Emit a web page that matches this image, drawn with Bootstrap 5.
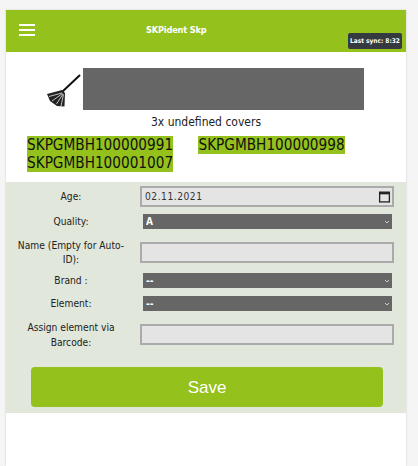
<!DOCTYPE html>
<html lang="en">
<head>
    <meta charset="UTF-8">
    <meta name="viewport" content="width=device-width, initial-scale=1.0">
    <title>SKPident Skp</title>
    <link href="https://cdn.jsdelivr.net/npm/bootstrap@5.3.0/dist/css/bootstrap.min.css" rel="stylesheet">
    <style>
        html, body { height: 100%; overflow: hidden; }
        body { background: #f5f5f5; font-family: "DejaVu Sans Condensed", "DejaVu Sans", sans-serif; font-stretch: condensed; color: #222; font-size: 10.2px; }
        .app-shell { margin: 10px 12px 0 6px; width: 400px; height: 456px; background: #fff; box-shadow: 0 0 2px #ccc; }
        .app-bar { height: 42px; background: #94c11c; position: relative; padding: 0; }
        .burger { width: 16px; margin-left: 13px; margin-top: -2px; }
        .burger span { display: block; height: 2px; background: #fff; margin-bottom: 3px; }
        .app-title { position: absolute; left: 140px; top: 13px; color: #fff; font-size: 9.2px; font-weight: 700; letter-spacing: -.2px; }
        .sync-tag { position: absolute; left: 342px; top: 23px; width: 54px; height: 16px; background: #343a40; color: #fff; font-size: 6.5px; line-height: 16px; text-align: center; border-radius: 2px; white-space: nowrap; font-weight: 700; }
        .cover-row { padding: 16px 0 0 40px; }
        .cover-img { width: 281px; height: 42px; background: #666; }
        .cover-text { text-align: center; font-size: 12px; line-height: 14px; margin-top: 5px; }
        .codes { padding: 8px 20px 0 21px; height: 53px; font-size: 15.2px; line-height: 17.5px; color: #111; }
        .code-chip { background: #94c11c; margin-right: 21px; }
        .form-zone { background: #e1e7db; height: 231px; padding-top: 4px; }
        .field { display: flex; align-items: center; }
        .field label { width: 134px; padding: 2px 8px 0 4px; text-align: center; line-height: 14.5px; flex: none; }
        .txt-in { width: 254px; height: 21px; background-color: #e4e4e4; border: 2px solid #aaa; padding: 0 3px; font-size: 10.2px; letter-spacing: .5px; color: #333; font-family: inherit; font-stretch: condensed; border-radius: 0; }
        .date-in { background-image: url("data:image/svg+xml,%3Csvg xmlns='http://www.w3.org/2000/svg' viewBox='0 0 12 12'%3E%3Crect x='1.5' y='2' width='9' height='9' fill='none' stroke='%23222' stroke-width='1.2'/%3E%3Crect x='1.5' y='2' width='9' height='2' fill='%23222'/%3E%3C/svg%3E"); background-repeat: no-repeat; background-position: right 1px center; background-size: 13px; }
        .form-select.pick { width: 249px; height: 15px; margin-left: 3px; padding: 0 3px; border: 0; border-radius: 0; background-color: #666; color: #fff; font-size: 10px; font-weight: 700; line-height: 15px; font-family: inherit; font-stretch: condensed; background-image: url("data:image/svg+xml,%3Csvg xmlns='http://www.w3.org/2000/svg' viewBox='0 0 8 8'%3E%3Cpath d='M2 3l2 2 2-2' fill='none' stroke='%23ccc' stroke-width='1'/%3E%3C/svg%3E"); background-position: right 1px center; background-size: 8px; }
        .save-btn { display: block; width: 352px; height: 40px; margin: 18px 0 0 25px; padding-top: 8px; background: #94c11c; border: 0; border-radius: 4px; color: #fff; font-family: "Liberation Sans", sans-serif; font-size: 17px; }
        .save-btn:hover { background: #94c11c; color: #fff; }
    </style>
</head>
<body>
    <div class="app-shell">
        <nav class="navbar app-bar d-block">
            <div class="d-flex align-items-center h-100">
                <div class="burger"><span></span><span></span><span class="mb-0"></span></div>
            </div>
            <div class="app-title">SKPident Skp</div>
            <div class="sync-tag">Last sync: 8:32</div>
        </nav>

        <div class="cover-row d-flex">
            <!-- broom -->
            <svg width="37" height="42" viewBox="0 0 37 42">
                <path d="M34 7 L16 24" stroke="#111" stroke-width="2" fill="none"/>
                <path d="M16 22 L19 25 L18.5 38.5 L11 38 L4 33 L1 26 Z" fill="#222"/>
                <path d="M16 25 L3 28.5 M16.5 25.5 L6 33 M17 26 L10.5 36 M17.5 26.5 L15 38" stroke="#e8e8e8" stroke-width=".8" fill="none"/>
            </svg>
            <div class="cover-img"></div>
        </div>
        <div class="cover-text">3x undefined covers</div>
        <div class="codes">
            <span class="code-chip">SKPGMBH100000991</span> <span class="code-chip">SKPGMBH100000998</span> <span class="code-chip">SKPGMBH100001007</span>
        </div>

        <div class="form-zone">
            <div class="field mb-0" style="height:21px">
                <label>Age:</label>
                <input class="txt-in date-in" type="text" value="02.11.2021">
            </div>
            <div class="field" style="height:15px;margin-top:7px">
                <label>Quality:</label>
                <select class="form-select pick"><option>A</option></select>
            </div>
            <div class="field" style="height:28px;margin-top:9px">
                <label>Name (Empty for Auto-ID):</label>
                <input class="txt-in" type="text">
            </div>
            <div class="field" style="height:15px;margin-top:7px">
                <label>Brand :</label>
                <select class="form-select pick"><option>--</option></select>
            </div>
            <div class="field" style="height:15px;margin-top:8px">
                <label>Element:</label>
                <select class="form-select pick"><option>--</option></select>
            </div>
            <div class="field" style="height:29px;margin-top:9px">
                <label>Assign element via Barcode:</label>
                <input class="txt-in" type="text">
            </div>
            <button class="btn save-btn" type="button">Save</button>
        </div>
    </div>
    <script src="https://cdn.jsdelivr.net/npm/bootstrap@5.3.0/dist/js/bootstrap.bundle.min.js"></script>
</body>
</html>
